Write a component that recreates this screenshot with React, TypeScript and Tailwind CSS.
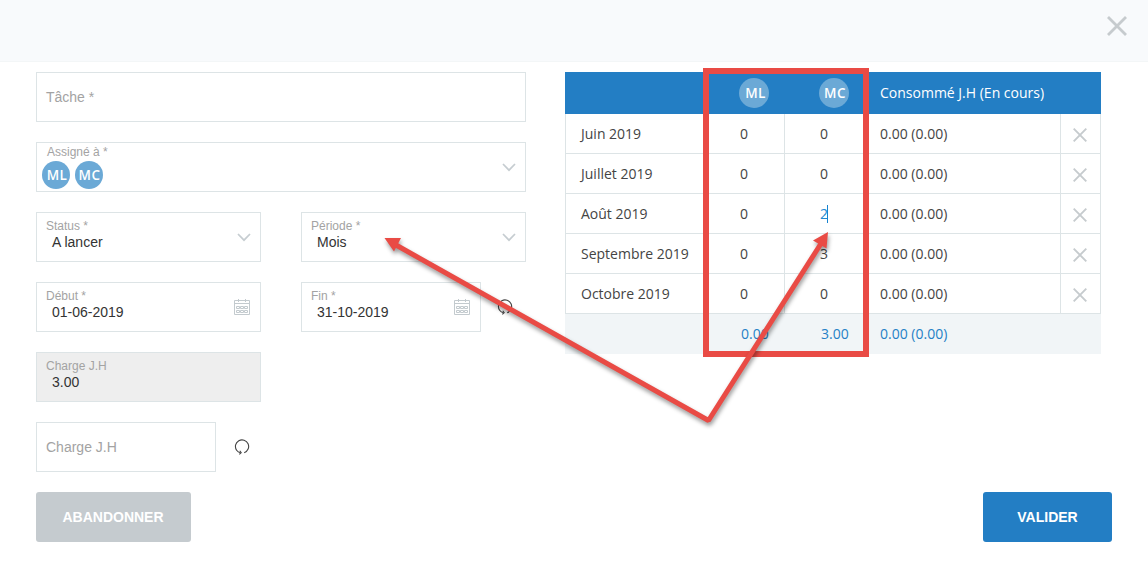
import type { ReactNode } from 'react';

const rows = [
  { month: 'Juin 2019', ml: '0', mc: '0', used: '0.00 (0.00)' },
  { month: 'Juillet 2019', ml: '0', mc: '0', used: '0.00 (0.00)' },
  { month: 'Août 2019', ml: '0', mc: '2', used: '0.00 (0.00)', editing: true },
  { month: 'Septembre 2019', ml: '0', mc: '3', used: '0.00 (0.00)' },
  { month: 'Octobre 2019', ml: '0', mc: '0', used: '0.00 (0.00)' },
];

function Cross({ size, width }: { size: number; width: number }) {
  return (
    <svg width={size} height={size} viewBox="0 0 20 20" fill="none" stroke="#c6cbce" strokeWidth={width} className="block">
      <path d="M1 1 19 19M19 1 1 19" />
    </svg>
  );
}

function Chevron() {
  return (
    <svg width="14" height="9" viewBox="0 0 14 9" fill="none" stroke="#c6cdd1" strokeWidth="1.7" className="block">
      <path d="M1 1 7 7.2 13 1" />
    </svg>
  );
}

function Calendar() {
  return (
    <svg width="16" height="17" viewBox="0 0 16 17" fill="none" stroke="#c3cace" className="mr-px mb-[2px] block">
      <path d="M.5 2.5H15.5V16.5H.5ZM.5 5.5H15.5M4.5 1V4M11.5 1V4" />
      <path d="M2.5 8.5H5.5V10.5H2.5ZM6.5 8.5H9.5V10.5H6.5ZM10.5 8.5H13.5V10.5H10.5ZM2.5 12.5H5.5V14.5H2.5ZM6.5 12.5H9.5V14.5H6.5ZM10.5 12.5H13.5V14.5H10.5Z" />
    </svg>
  );
}

function Refresh() {
  return (
    <svg width="16" height="16" viewBox="0 0 16 16" fill="none" stroke="#444" strokeWidth="1.1" className="block">
      <path d="M10.2 13.7A6.6 6.6 0 1 0 2.6 11.2C3.500 12.500 4.600 13.300 6.500 13.700" />
      <path d="M5.800 11.700 7.200 13.700 5.300 15.400" />
    </svg>
  );
}

function Avatar({ children, className }: { children: string; className: string }) {
  return (
    <span className={`flex items-center justify-center rounded-full bg-[#6ba9d6] font-['Open_Sans',sans-serif] text-[13.500px] font-semibold tracking-[0.4px] text-white ${className}`}>
      {children}
    </span>
  );
}

function Field({ label, value, icon, className = '' }: { label: string; value?: string; icon?: ReactNode; className?: string }) {
  return (
    <div className={`flex h-[50px] items-center justify-between border border-[#dde4e6] pr-[9px] pl-[9px] ${className}`}>
      {value ? (
        <div className="flex h-full flex-col pt-[6px]">
          <span className="text-[12px] leading-[14px] text-[#a3a3a3]">{label}</span>
          <span className="pl-[6px] text-[14px] leading-[18px] text-[#333]">{value}</span>
        </div>
      ) : (
        <span className="text-[14px] text-[#a3a3a3]">{label}</span>
      )}
      {icon}
    </div>
  );
}

const cell = 'border-r border-b border-[#dde4e6]';

export default function App() {
  return (
    <div className="relative h-[579px] w-[1148px] overflow-hidden bg-white font-['Liberation_Sans',sans-serif]">
      <header className="flex h-[62px] justify-end border-b border-[#f3f6f7] bg-[#f8fafc] pt-[16px] pr-[21px]">
        <Cross size={20} width={2.8} />
      </header>

      <main className="flex items-start gap-[39px] px-[36px] pt-[10px]">
        <form className="flex w-[490px] flex-col gap-[20px]">
          <Field label="Tâche *" />
          <div className="flex h-[50px] items-center justify-between border border-[#dde4e6] pr-[9px] pl-[5px]">
            <div className="flex h-full flex-col pt-[2px]">
              <span className="pl-[5px] text-[12px] leading-[14px] text-[#a3a3a3]">Assigné à *</span>
              <div className="flex gap-[5px] pt-[2px]">
                <Avatar className="h-[28px] w-[28px] pl-[2px]">ML</Avatar>
                <Avatar className="h-[28px] w-[28px] pl-px">MC</Avatar>
              </div>
            </div>
            <Chevron />
          </div>
          <div className="flex gap-[40px]">
            <Field label="Status *" value="A lancer" icon={<Chevron />} className="w-[225px]" />
            <Field label="Période *" value="Mois" icon={<Chevron />} className="w-[225px]" />
          </div>
          <div className="flex items-center">
            <Field label="Début *" value="01-06-2019" icon={<Calendar />} className="mr-[40px] w-[225px]" />
            <Field label="Fin *" value="31-10-2019" icon={<Calendar />} className="mr-[16px] w-[180px]" />
            <Refresh />
          </div>
          <Field label="Charge J.H" value="3.00" className="w-[225px] bg-[#eee]" />
          <div className="flex items-center gap-[18px]">
            <Field label="Charge J.H" className="w-[180px]" />
            <Refresh />
          </div>
        </form>

        <section className="w-[536px] font-['Open_Sans',sans-serif] text-[14px] text-[#444]">
          <div className="grid h-[42px] grid-cols-[140px_80px_80px_236px] items-center bg-[#237ec4] text-white">
            <span />
            <Avatar className="ml-[34px] h-[30px] w-[30px] pl-[3px]">ML</Avatar>
            <Avatar className="ml-[34px] h-[30px] w-[30px] pl-[2px]">MC</Avatar>
            <span className="pb-px pl-[15px]">Consommé J.H (En cours)</span>
          </div>
          {rows.map((r) => (
            <div key={r.month} className="grid h-[40px] grid-cols-[140px_80px_80px_196px_40px] leading-[39px]">
              <span className={`border-l pl-[15px] ${cell}`}>{r.month}</span>
              <span className={`pl-[35px] ${cell}`}>{r.ml}</span>
              <span className={`flex items-center pl-[35px] ${cell}`}>
                <span className={r.editing ? 'text-[#2389d0]' : ''}>{r.mc}</span>
                {r.editing && <span className="-ml-px h-[18px] w-px bg-[#1683d0]" />}
              </span>
              <span className={`pl-[15px] ${cell}`}>{r.used}</span>
              <span className={`flex items-center justify-center pt-[3px] pr-px ${cell}`}>
                <Cross size={14} width={2.7} />
              </span>
            </div>
          ))}
          <div className="grid h-[40px] grid-cols-[140px_80px_80px_236px] bg-[#f1f5f7] leading-[40px] text-[#2580c6]">
            <span />
            <span className="pl-[36px]">0.00</span>
            <span className="pl-[36px]">3.00</span>
            <span className="pl-[15px]">0.00 (0.00)</span>
          </div>
        </section>
      </main>

      <footer className="flex justify-between px-[36px] pt-[20px] text-[14px] font-bold text-white">
        <button className="h-[50px] w-[155px] rounded-[3px] bg-[#c5cbcf] pr-px">ABANDONNER</button>
        <button className="h-[50px] w-[129px] rounded-[3px] bg-[#237ec4]">VALIDER</button>
      </footer>

      <div className="pointer-events-none absolute top-[68px] left-[703px] h-[289px] w-[166px] border-[6px] border-[#e94b45]" />
      <svg className="pointer-events-none absolute inset-0 drop-shadow-[1px_3px_2px_rgba(0,0,0,0.4)]" width="1148" height="579" viewBox="0 0 1148 579">
        <path d="M396 245 708.5 420.5 822 242" fill="none" stroke="#e94b45" strokeWidth="5" strokeLinejoin="bevel" />
        <path d="M384.500 238 401 238 394 251.500ZM828 232 826.500 248.500 813 240.500Z" fill="#e94b45" />
      </svg>
    </div>
  );
}
